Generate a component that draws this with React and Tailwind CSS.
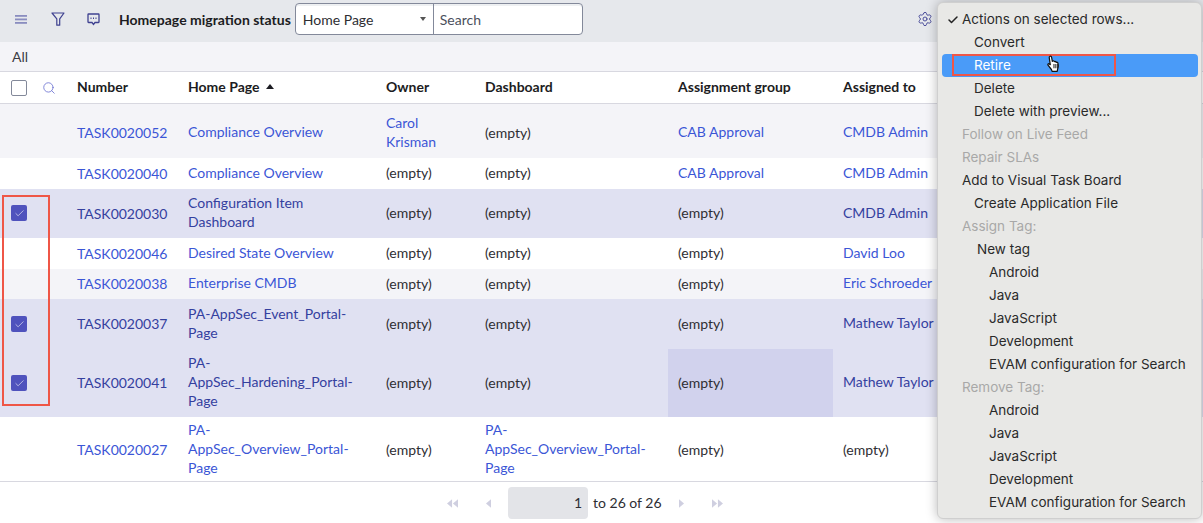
import React from 'react';
import { Search, Settings, Check } from 'lucide-react';

const rows = [
  { num: 'TASK0020052', home: ['Compliance Overview'], owner: ['Carol', 'Krisman'], dash: null, group: 'CAB Approval', to: 'CMDB Admin', h: 'h-[50px]', bg: 'bg-[#f4f4f8]' },
  { num: 'TASK0020040', home: ['Compliance Overview'], owner: null, dash: null, group: 'CAB Approval', to: 'CMDB Admin', h: 'h-[31px]', bg: 'bg-white' },
  { num: 'TASK0020030', home: ['Configuration Item', 'Dashboard'], owner: null, dash: null, group: null, to: 'CMDB Admin', h: 'h-[49px]', bg: 'bg-[#e0e1f2]', sel: true, box: 'mb-[1px]' },
  { num: 'TASK0020046', home: ['Desired State Overview'], owner: null, dash: null, group: null, to: 'David Loo', h: 'h-[31px]', bg: 'bg-white' },
  { num: 'TASK0020038', home: ['Enterprise CMDB'], owner: null, dash: null, group: null, to: 'Eric Schroeder', h: 'h-[30px]', bg: 'bg-[#f4f4f8]' },
  { num: 'TASK0020037', home: ['PA-AppSec_Event_Portal-', 'Page'], owner: null, dash: null, group: null, to: 'Mathew Taylor', h: 'h-[50px]', bg: 'bg-[#e0e1f2]', sel: true },
  { num: 'TASK0020041', home: ['PA-', 'AppSec_Hardening_Portal-', 'Page'], owner: null, dash: null, group: null, to: 'Mathew Taylor', h: 'h-[68px]', bg: 'bg-[#e0e1f2]', sel: true, hot: true },
  { num: 'TASK0020027', home: ['PA-', 'AppSec_Overview_Portal-', 'Page'], owner: null, dash: ['PA-', 'AppSec_Overview_Portal-', 'Page'], group: null, to: null, h: 'h-[64px] pt-[2px]', bg: 'bg-white' },
];

const menu = [
  { t: 'Actions on selected rows...', pad: 'pl-[20px]', check: true },
  { t: 'Convert', pad: 'pl-[32px]' },
  { t: 'Retire', pad: 'pl-[32px]', active: true },
  { t: 'Delete', pad: 'pl-[32px]' },
  { t: 'Delete with preview...', pad: 'pl-[32px]' },
  { t: 'Follow on Live Feed', pad: 'pl-[20px]', off: true },
  { t: 'Repair SLAs', pad: 'pl-[20px]', off: true },
  { t: 'Add to Visual Task Board', pad: 'pl-[20px]' },
  { t: 'Create Application File', pad: 'pl-[32px]' },
  { t: 'Assign Tag:', pad: 'pl-[20px]', off: true },
  { t: 'New tag', pad: 'pl-[35px]' },
  { t: 'Android', pad: 'pl-[47px]' },
  { t: 'Java', pad: 'pl-[47px]' },
  { t: 'JavaScript', pad: 'pl-[47px]' },
  { t: 'Development', pad: 'pl-[47px]' },
  { t: 'EVAM configuration for Search', pad: 'pl-[47px]' },
  { t: 'Remove Tag:', pad: 'pl-[20px]', off: true },
  { t: 'Android', pad: 'pl-[47px]' },
  { t: 'Java', pad: 'pl-[47px]' },
  { t: 'JavaScript', pad: 'pl-[47px]' },
  { t: 'Development', pad: 'pl-[47px]' },
  { t: 'EVAM configuration for Search', pad: 'pl-[47px]' },
];

function Lines({ lines, link }) {
  if (!lines) return <div className="pb-[2px] text-[#2e2e33]">(empty)</div>;
  return (
    <div className={`pb-[1px] ${link}`}>
      {lines.map((l) => (
        <div key={l} className="leading-[18.67px]">{l}</div>
      ))}
    </div>
  );
}

function Arrow({ flip, double }) {
  return (
    <svg width={double ? 11 : 5} height="9" viewBox={double ? '0 0 13 10' : '0 0 6 10'} className={flip ? 'rotate-180' : ''} fill="#cfcfe0">
      <path d="M0 0l6 5-6 5z" />
      {double && <path d="M7 0l6 5-6 5z" />}
    </svg>
  );
}

function HandCursor() {
  return (
    <svg width="15" height="18" viewBox="0 0 15 19" className="absolute left-[1046px] top-[55px]">
      <path d="M3.500 1.500c.9-.6 1.800 0 2 .9l.8 4.300.4-.3c.8-.4 1.600 0 1.800.6.8-.4 1.600 0 1.800.7.9-.3 1.700.2 1.900 1 .5 2 .5 4-.2 5.600l-.6 3H6l-.7-2-3.600-4.500c-.6-.9.4-2 1.400-1.400l1 .8L3 2.900c-.1-.6 0-1.100.5-1.400z" fill="#fff" stroke="#111" strokeWidth="1.300" strokeLinejoin="round" />
      <path d="M8 9.500v4.500M10 9.500v4.500M12 9.500v4.500" stroke="#111" strokeWidth="1" />
    </svg>
  );
}

export default function App() {
  const blue = 'text-[#3b56d6]';
  const blueSel = 'text-[#34409f]';
  return (
    <div className="relative w-[1203px] h-[523px] overflow-hidden bg-white font-['Lato','Liberation_Sans',sans-serif] text-[14px] text-[#2e2e33]">
      {/* Toolbar */}
      <div className="h-[42px] bg-[#e6e8ec] flex items-start pt-[3px] pl-[15px]">
        <div className="h-[32px] flex items-center">
          <svg width="12" height="9" viewBox="0 0 12 9" fill="#8a8dbf">
            <rect y="0" width="12" height="1.800" />
            <rect y="3.500" width="12" height="1.800" />
            <rect y="7" width="12" height="1.800" />
          </svg>
          <svg width="14" height="14" viewBox="0 0 14 14" fill="none" stroke="#3f4190" strokeWidth="1.200" strokeLinejoin="round" className="ml-[24px]">
            <path d="M1 1h12L8.700 6.800v6.400H5.800V6.800z" />
          </svg>
          <svg width="13" height="13" viewBox="0 0 13 13" fill="none" className="ml-[22px]">
            <path d="M1.500 1h10c.3 0 .5.2.5.5v7.500c0 .3-.2.500-.5.500H8l-1.500 2-1.500-2H1.500c-.3 0-.5-.2-.5-.5V1.500c0-.3.2-.5.5-.5z" stroke="#3f4190" strokeWidth="1.300" />
            <path d="M3.500 5.200h1M6 5.200h1M8.500 5.200h1" stroke="#3f4190" strokeWidth="1.400" />
          </svg>
          <span className="ml-[19px] font-bold text-[#1c1c22] whitespace-nowrap">Homepage migration status</span>
        </div>
        <div className="ml-[4px] flex h-[32px] w-[288px] rounded-[4px] border border-[#83899a] bg-white shadow-[inset_0_2px_0_#eef0f2]">
          <div className="w-[138px] border-r border-[#83899a] flex items-center justify-between pl-[7px] pr-[7px]">
            <span>Home Page</span>
            <span className="w-0 h-0 border-x-[3px] border-x-transparent border-t-[4px] border-t-[#555]" />
          </div>
          <div className="flex-1 flex items-center pl-[6px] text-[#4b4f5c]">Search</div>
        </div>
        <Settings size={16} strokeWidth={1.500} className="absolute left-[917px] top-[11px] text-[#4d4f9c]" />
      </div>

      {/* Breadcrumb */}
      <div className="h-[30px] bg-[#f4f4f8] border-b border-[#d8d8e0] flex items-center pl-[12px] text-[#3c3c44]">All</div>

      {/* Column headers */}
      <div className="h-[32px] flex items-center border-b border-[#d8d8e0] font-bold text-[#1c1c22]">
        <div className="w-[67px] flex items-center pl-[11px]">
          <span className="w-[16px] h-[16px] rounded-[2px] border border-[#83899a] bg-white" />
          <Search size={14} strokeWidth={1.400} className="ml-[15px] text-[#6a6fd0]" />
        </div>
        <div className="w-[111px] pl-[10px] pb-[2px]">Number</div>
        <div className="w-[198px] pl-[10px] pb-[2px] flex items-center gap-[6px]">
          Home Page
          <span className="w-0 h-0 border-x-[4px] border-x-transparent border-b-[5px] border-b-[#1c1c22]" />
        </div>
        <div className="w-[99px] pl-[10px] pb-[2px]">Owner</div>
        <div className="w-[193px] pl-[10px] pb-[2px]">Dashboard</div>
        <div className="w-[165px] pl-[10px] pb-[2px]">Assignment group</div>
        <div className="pl-[10px] pb-[2px]">Assigned to</div>
      </div>

      <div className="h-[4px] bg-[#f4f4f8]" />

      {/* Rows */}
      {rows.map((r) => {
        const link = r.sel ? blueSel : blue;
        return (
          <div key={r.num} className={`${r.h} ${r.bg} flex items-center`}>
            <div className="w-[67px] pl-[11px]">
              {r.sel && (
                <span className={`flex w-[16px] h-[16px] rounded-[2px] bg-[#4f52bd] items-center justify-center ${r.box || ''}`}>
                  <Check size={11} strokeWidth={1.500} className="text-[#e0e1f2]" />
                </span>
              )}
            </div>
            <div className={`w-[111px] pl-[10px] pb-[1px] ${link}`}>{r.num}</div>
            <div className="w-[198px] pl-[10px]"><Lines lines={r.home} link={link} /></div>
            <div className="w-[99px] pl-[10px]"><Lines lines={r.owner} link={link} /></div>
            <div className="w-[193px] pl-[10px]"><Lines lines={r.dash} link={link} /></div>
            <div className={`w-[165px] h-full pl-[10px] flex items-center ${r.hot ? 'bg-[#d1d2ed]' : ''}`}>
              <Lines lines={r.group && [r.group]} link={link} />
            </div>
            <div className="pl-[10px]"><Lines lines={r.to && [r.to]} link={link} /></div>
          </div>
        );
      })}

      {/* Pager */}
      <div className="h-[42px] border-t border-[#d8d8e0] pt-[1px] flex items-center">
        <div className="ml-[447px] flex"><Arrow flip double /></div>
        <div className="ml-[28px] flex"><Arrow flip /></div>
        <div className="ml-[17px] w-[80px] h-[32px] rounded-[4px] bg-[#e3e4e8] flex items-center justify-end pr-[6px] pb-[1px] text-[#2e2e33]">1</div>
        <span className="ml-[5px] pb-[1px] w-[69px] whitespace-nowrap text-[#2e2e33]">to 26 of 26</span>
        <div className="ml-[17px] flex"><Arrow /></div>
        <div className="ml-[28px] flex"><Arrow double /></div>
      </div>

      {/* Context menu */}
      <div className="absolute left-[937px] top-[2px] w-[265px] h-[517px] rounded-[6px] border border-[#cfcfcf] bg-[#e8e8e6] shadow-[0_0_12px_rgba(0,0,0,0.28)] pt-[5px] pl-[4px] pr-[3px] font-['Inter','Liberation_Sans',sans-serif] text-[13.5px] text-[#2a2a2a]">
        {menu.map((m, i) => (
          <div
            key={i}
            className={`relative h-[23px] flex items-center rounded-[4px] ${m.pad} ${m.active ? 'bg-[#4a9bf8] text-white' : ''} ${m.off ? 'text-[#a8a8a8]' : ''}`}
          >
            {m.check && <Check size={12} strokeWidth={3} className="absolute left-[5px] text-[#222]" />}
            {m.t}
          </div>
        ))}
      </div>

      {/* Annotations */}
      <div className="absolute left-[952px] top-[54px] w-[164px] h-[22px] border-2 border-[#ef5647]" />
      <div className="absolute left-[2px] top-[195px] w-[48px] h-[211px] border-2 border-[#ef5647]" />
      <HandCursor />
    </div>
  );
}
